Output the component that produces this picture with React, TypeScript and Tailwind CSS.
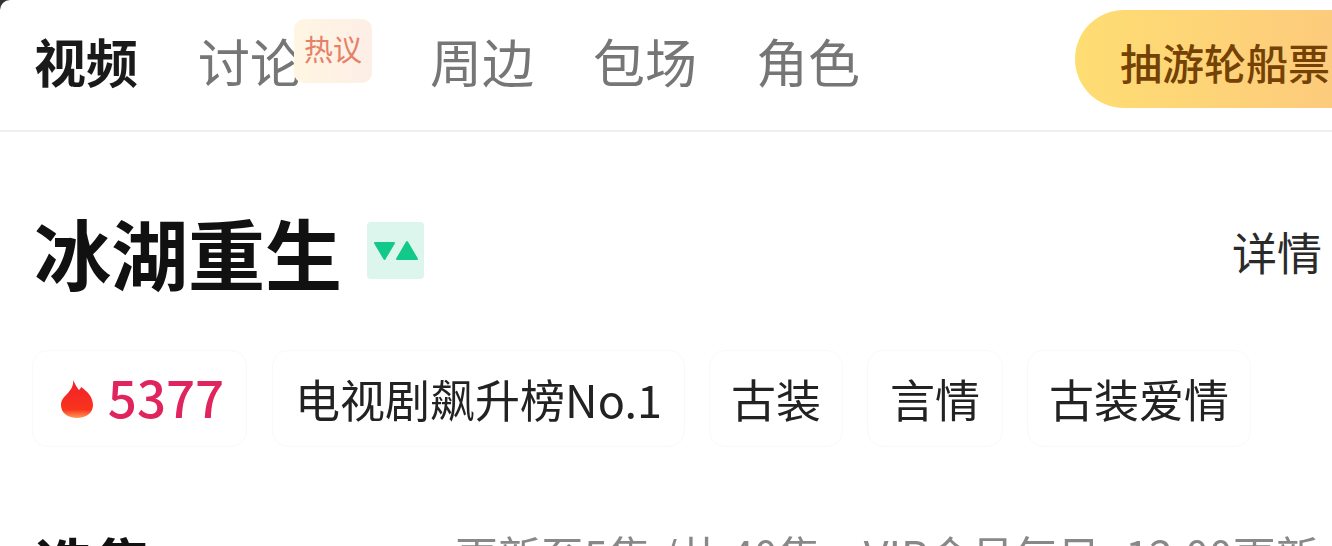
import React from 'react';

const cjk = "font-['Noto_Sans_CJK_SC','Noto_Sans',sans-serif]";

const Flame = () => (
  <svg width="32" height="38" viewBox="0 0 32 38" className="shrink-0">
    <defs>
      <linearGradient id="flame" x1="0" y1="0" x2="0" y2="1">
        <stop offset="0%" stopColor="#f0202c" />
        <stop offset="78%" stopColor="#f9341c" />
        <stop offset="100%" stopColor="#ff9a5a" />
      </linearGradient>
    </defs>
    <path
      d="M12 0c2 3 3 7 6 10 1-1 2-2 2-3 6 4 12 10 12 18 0 8-7 13-16 13S0 33 0 25c0-5 3-8 6-11 4-4 7-9 6-14z"
      fill="url(#flame)"
    />
  </svg>
);

const Tag = ({ children, className = '' }: { children: React.ReactNode; className?: string }) => (
  <div className={`flex h-[97px] items-center justify-center rounded-[16px] border border-[#f9f9f9] bg-white text-[45px] text-[#222] ${className}`}>
    {children}
  </div>
);

const App: React.FC = () => {
  return (
    <div className={`h-[546px] w-[1332px] overflow-hidden bg-[#333] ${cjk}`}>
      <div className="h-full rounded-tl-[10px] bg-white blur-[0.7px]">
        {/* Tabs */}
        <div className="flex h-[132px] items-center border-b-2 border-[#efefef] pl-[34px]">
          <span className="mt-[-8px] text-[52px] leading-none font-bold text-[#1a1a1a]">视频</span>
          <span className="relative mt-[-8px] ml-[60px] text-[52px] leading-none text-[#767676]">
            讨论
            <span className="absolute top-[-16px] left-[96px] flex h-[64px] w-[78px] items-center justify-center rounded-[10px] bg-gradient-to-r from-[#fff6e2] to-[#fdeee6] pb-[6px] text-[29px] leading-none text-[#e68068]">
              热议
            </span>
          </span>
          <span className="mt-[-8px] ml-[128px] text-[52px] leading-none text-[#767676]">周边</span>
          <span className="mt-[-8px] ml-[59px] text-[52px] leading-none text-[#767676]">包场</span>
          <span className="mt-[-8px] ml-[59px] text-[52px] leading-none text-[#767676]">角色</span>
          <div className="mt-[-13px] ml-auto flex h-[98px] w-[257px] items-center rounded-l-full bg-gradient-to-r from-[#fedd72] to-[#fdcb7c] pt-[6px] pl-[45px] text-[42px] leading-none font-medium whitespace-nowrap text-[#744205]">
            抽游轮船票
          </div>
        </div>

        {/* Title */}
        <div className="mt-[90px] flex h-[57px] items-center pr-[10px] pl-[34px]">
          <h1 className="mt-[2px] text-[77px] leading-none font-bold text-[#111]">冰湖重生</h1>
          <div className="ml-[25px] flex h-[57px] w-[57px] items-center justify-center rounded-[4px] bg-[#dcf6ee]">
            <svg width="46" height="22" viewBox="0 0 46 22">
              <path d="M2 3h19l-9.500 16z" fill="#12c989" stroke="#12c989" strokeWidth="2" strokeLinejoin="round" />
              <path d="M34 2l10 17H24z" fill="#12c989" stroke="#12c989" strokeWidth="2" strokeLinejoin="round" />
            </svg>
          </div>
          <span className="mt-[2px] ml-auto text-[45px] leading-none text-[#2a2a2a]">详情</span>
        </div>

        {/* Tags */}
        <div className="mt-[71px] flex pl-[32px]">
          <Tag className="w-[215px] gap-[15px] pl-[6px]">
            <Flame />
            <span className="mt-[-4px] text-[51px] leading-none font-medium text-[#e0245e]">5377</span>
          </Tag>
          <Tag className="ml-[25px] w-[413px]">电视剧飙升榜No.1</Tag>
          <Tag className="ml-[24px] w-[134px]">古装</Tag>
          <Tag className="ml-[24px] w-[136px]">言情</Tag>
          <Tag className="ml-[24px] w-[224px]">古装爱情</Tag>
        </div>

        {/* Episodes */}
        <div className="mt-[86px] flex items-start pl-[35px] whitespace-nowrap">
          <span className="text-[58px] leading-none font-bold text-[#111]">选集</span>
          <span className="ml-[304px] text-[43px] leading-none text-[#888]">
            更新至5集 /共 40集，VIP会员每日<span className="ml-[25px]">12:00更新</span>
          </span>
        </div>
      </div>
    </div>
  );
};

export default App;
